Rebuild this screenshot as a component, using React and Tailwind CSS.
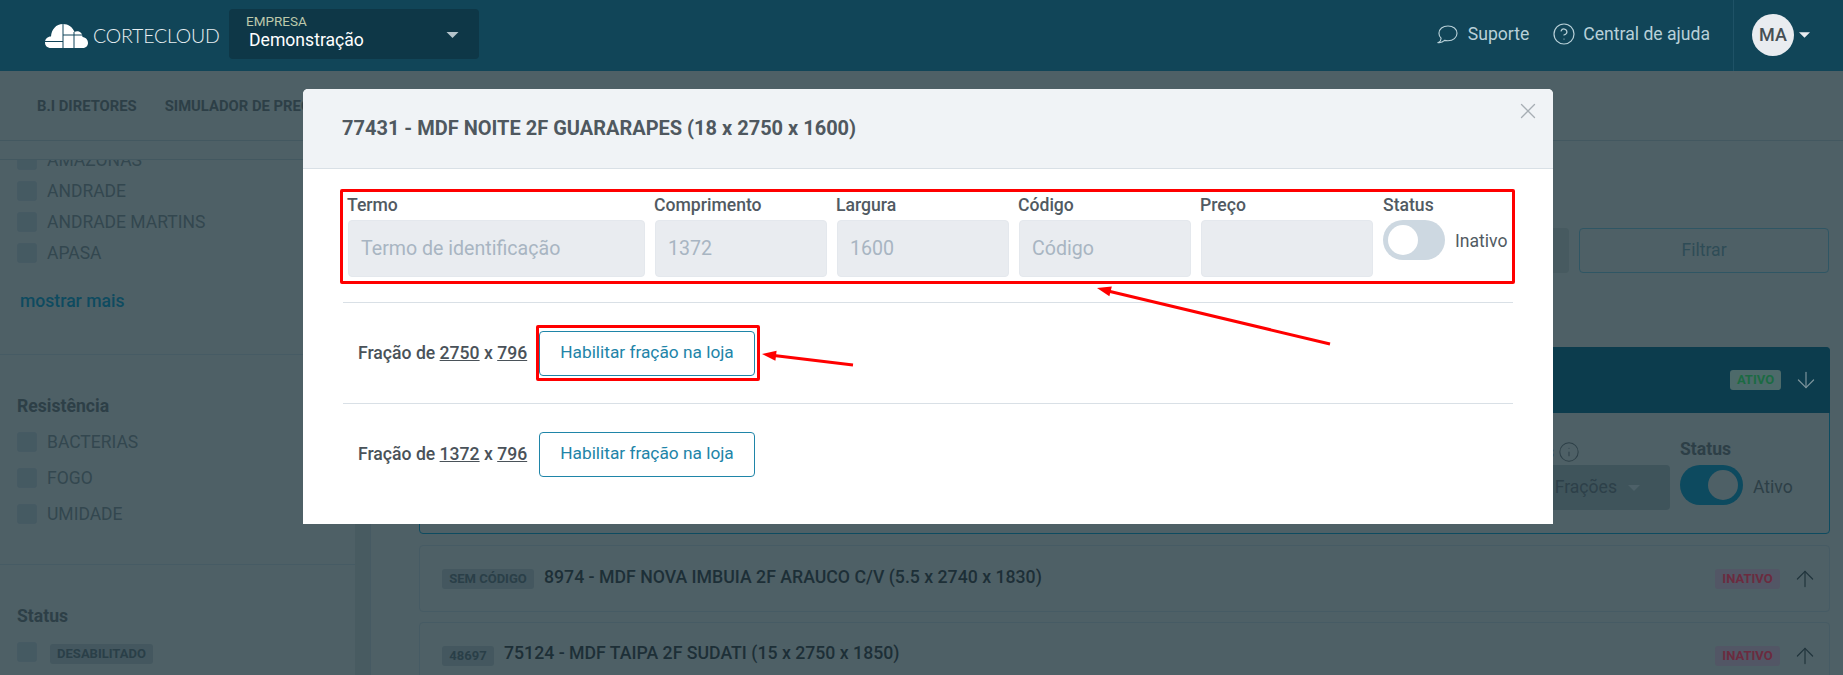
import React from "react";
import { ArrowDown, ArrowUp, CircleHelp, Info, X } from "lucide-react";

const Caret = ({ className }) => (
  <svg viewBox="0 0 12 6" className={className}><path d="M0 0h12L6 6z" fill="currentColor" /></svg>
);

const Logo = () => (
  <svg viewBox="0 0 43 24" className="w-[43px] h-[24px] shrink-0">
    <path d="M6 24C2 24 0 21.500 0 18.500C0 15 2.500 12.500 6 12.500C6.500 5.500 11 0 18 0C23.500 0 27.500 3 29.500 8C31 7 32.500 7 34 7.500C36.500 8.500 37.500 10.500 37.500 13C41 13.500 43 16 43 19C43 22 40.500 24 37.500 24Z" fill="#fff" />
    <path d="M18 0V24M29 8V24M18 11H38M0 17.500H18" stroke="#11455a" strokeWidth="1" fill="none" />
  </svg>
);

const Check = ({ children }) => (
  <div className="flex items-center h-[20px]">
    <span className="w-[20px] h-[20px] rounded-[3px] bg-[#455a62] border border-[#465a63] shrink-0" />
    <span className="ml-[10px] text-[17.500px] text-[#33474f]">{children}</span>
  </div>
);

const Field = ({ label, placeholder, w }) => (
  <div className={`${w} shrink-0`}>
    <div className="h-[24px] text-[17.600px] font-medium leading-[18px] text-[#515a62] -ml-px">{label}</div>
    <div className="h-[57px] flex items-center pl-[12px] rounded-[4px] bg-[#e9ecf0] border border-[#e4e8ed] text-[19.600px] text-[#a8b5c2]">{placeholder}</div>
  </div>
);

const HabButton = () => (
  <button className="w-[216px] h-[45px] rounded-[4px] border border-[#1f85a8] bg-white text-[17.300px] text-[#2284a8]">Habilitar fração na loja</button>
);

const Badge = ({ children, className }) => (
  <span className={`inline-flex items-center justify-center h-[20px] rounded-[3px] text-[13px] font-bold ${className}`}>{children}</span>
);

const ProductCard = ({ code, codeW, title, last }) => (
  <div className={`border border-[#465b64] rounded-[4px] flex items-center pl-[22px] pr-[11px] ${last ? "h-[80px] items-start pt-[23px] mt-[10px]" : "h-[67px] mt-[11px]"}`}>
    <Badge className={`${codeW} bg-[#44575f] text-[#2a3f48]`}>{code}</Badge>
    <span className="ml-[10px] -mt-[3px] text-[17.700px] font-medium text-[#1d2f37] leading-[20px]">{title}</span>
    <Badge className="ml-auto w-[65px] bg-[#525665] text-[#6b2b3f]">INATIVO</Badge>
    <ArrowUp className="ml-[12px] w-[26px] h-[26px] -my-[3px] text-[#20343c]" strokeWidth={1.100} />
  </div>
);

export default function App() {
  return (
    <div className="relative w-[1843px] h-[675px] overflow-hidden bg-[#4e6066] font-['Roboto',sans-serif]">
      <header className="h-[71px] bg-[#114558] flex items-center">
        <div className="ml-[45px] flex items-center">
          <Logo />
          <span className="ml-[5px] w-[136px] font-['Lato',sans-serif] font-light text-[19.500px] tracking-[-0.2px] text-[#e8eff2]">CORTECLOUD</span>
        </div>
        <div className="w-[250px] h-[50px] -mt-[3px] rounded-[4px] bg-[#0e3747] pl-[17px] pr-[20px] flex items-center justify-between">
          <div className="-mt-[4px]">
            <div className="text-[13.500px] leading-[12px] text-[#bcc8ab]">EMPRESA</div>
            <div className="ml-[3px] mt-[3px] text-[17.600px] leading-[20px] text-white">Demonstração</div>
          </div>
          <Caret className="w-[13px] h-[6px] mt-[1px] text-[#b4c4cb]" />
        </div>
        <div className="ml-auto -mt-[2px] flex items-center text-[#b8d0d8] text-[17.600px]">
          <svg viewBox="0 0 22 20" className="w-[21px] h-[19px]" fill="none" stroke="currentColor" strokeWidth="1.200">
            <path d="M11.500 1C6 1 2 4.300 2 8.800C2 10.800 2.800 12.500 4.200 13.800C4.300 15.500 3.300 17.400 1.500 18.500C4 18.700 6.200 17.900 7.900 16.200C9 16.500 10.200 16.600 11.500 16.600C17 16.600 21 13.300 21 8.800C21 4.300 17 1 11.500 1Z" />
          </svg>
          <span className="ml-[10px]">Suporte</span>
          <CircleHelp className="ml-[23px] w-[24px] h-[24px]" strokeWidth={1.200} />
          <span className="ml-[7px]">Central de ajuda</span>
        </div>
        <div className="ml-[23px] h-[71px] border-l border-[#1f5266] w-[110px] flex items-center pl-[18px]">
          <span className="w-[42px] h-[42px] -mt-[2px] rounded-full bg-[#e9ecf0] text-[#464f55] font-medium text-[18px] flex items-center justify-center">MA</span>
          <Caret className="ml-[5px] -mt-[2px] w-[11px] h-[6px] text-[#e9ecf0]" />
        </div>
      </header>

      <nav className="h-[70px] border-b border-[#435860] flex items-center pl-[37px] pt-[2px] gap-[28px] text-[14.800px] font-bold text-[#2d3f47]">
        <span>B.I DIRETORES</span>
        <span>SIMULADOR DE PREÇOS</span>
      </nav>

      <div className="flex">
        <aside className="w-[355px] shrink-0 pt-[18px]">
          <div className="border-t border-[#435860] h-[516px] overflow-hidden pl-[17px]">
            <div className="-mt-[10px] flex flex-col gap-[11px]">
              <Check>AMAZONAS</Check>
              <Check>ANDRADE</Check>
              <Check>ANDRADE MARTINS</Check>
              <Check>APASA</Check>
            </div>
            <div className="mt-[26px] ml-[3px] h-[24px] leading-[24px] text-[17.600px] font-medium text-[#0e4b60]">mostrar mais</div>
            <div className="mt-[41px] -ml-[17px] border-t border-[#465b64]" />
            <div className="mt-[39px] h-[24px] leading-[24px] text-[17.600px] font-bold text-[#2d3f47]">Resistência</div>
            <div className="mt-[14px] flex flex-col gap-[16px]">
              <Check>BACTERIAS</Check>
              <Check>FOGO</Check>
              <Check>UMIDADE</Check>
            </div>
            <div className="mt-[40px] -ml-[17px] border-t border-[#465b64]" />
            <div className="mt-[39px] h-[24px] leading-[24px] text-[17.600px] font-bold text-[#2d3f47]">Status</div>
            <div className="mt-[12px] flex items-center">
              <span className="w-[20px] h-[20px] rounded-[3px] bg-[#455a62] border border-[#465a63]" />
              <Badge className="ml-[13px] w-[103px] mt-[4px] bg-[#44575f] text-[#2a3f48]">DESABILITADO</Badge>
            </div>
          </div>
        </aside>
        <div className="w-[16px] h-[540px] shrink-0 bg-[#485b61] border-r border-[#465a63]" />
        <main className="flex-1 pl-[48px] pr-[13px] pt-[87px]">
          <div className="flex justify-end gap-[10px] pr-[1px]">
            <div className="w-[300px] h-[45px] rounded-[4px] bg-[#475a60]" />
            <button className="w-[250px] h-[45px] rounded-[4px] border border-[#2f5664] text-[17.600px] text-[#2e4c56]">Filtrar</button>
          </div>
          <div className="mt-[74px] h-[187px] border border-[#0d4b60] rounded-[4px]">
            <div className="h-[66px] -m-px bg-[#0c3c4d] rounded-t-[4px] flex items-center justify-end pr-[11px]">
              <Badge className="w-[51px] bg-[#4d6a6a] text-[#1b6a43]">ATIVO</Badge>
              <ArrowDown className="ml-[12px] w-[26px] h-[26px] text-[#7d949c]" strokeWidth={1.100} />
            </div>
            <div className="flex justify-end gap-[10px] pr-[10px] pt-[27px]">
              <div className="w-[300px]">
                <div className="h-[26px] flex items-center justify-end pr-[90px] text-[17.600px] font-bold text-[#2d3f47]">
                  Frações <Info className="ml-[4px] w-[22px] h-[22px] text-[#2d3f47]" strokeWidth={1.100} />
                </div>
                <div className="h-[45px] rounded-[4px] bg-[#3f545b] flex items-center justify-end pr-[30px] text-[17.600px] text-[#2d4049]">
                  Frações <Caret className="ml-[11px] w-[12px] h-[6px] text-[#4d6068]" />
                </div>
              </div>
              <div className="w-[139px]">
                <div className="h-[26px] text-[17.600px] font-bold text-[#2d3f47] leading-[20px]">Status</div>
                <div className="flex items-center">
                  <span className="w-[63px] h-[40px] rounded-full bg-[#0d4a5f] flex items-center justify-end pr-[5px]">
                    <span className="w-[30px] h-[30px] rounded-full bg-[#4e6066]" />
                  </span>
                  <span className="ml-[10px] mt-[4px] text-[17.600px] text-[#2d3f47]">Ativo</span>
                </div>
              </div>
            </div>
          </div>
          <ProductCard code="SEM CÓDIGO" codeW="w-[92px]" title="8974 - MDF NOVA IMBUIA 2F ARAUCO C/V (5.5 x 2740 x 1830)" />
          <ProductCard last code="48697" codeW="w-[52px]" title="75124 - MDF TAIPA 2F SUDATI (15 x 2750 x 1850)" />
        </main>
      </div>

      <div className="absolute left-[303px] top-[89px] w-[1250px] h-[435px] bg-white rounded-t-[5px]">
        <div className="relative h-[80px] bg-[#f0f3f6] border-b border-[#d9e0e6] rounded-t-[5px] flex items-center pl-[39px]">
          <span className="text-[20px] font-bold text-[#4f585f] -mt-[1px]">77431 - MDF NOITE 2F GUARARAPES (18 x 2750 x 1600)</span>
          <X className="absolute left-[1212px] top-[9px] w-[26px] h-[26px] text-[#a7aeb4]" strokeWidth={1.200} />
        </div>
        <div className="px-[40px] pt-[20px]">
          <div className="-mx-[3px] -mr-[2px] h-[95px] border-[3px] border-[#ff0000] rounded-[2px] pl-[5px] pt-[4px] flex gap-[10px]">
            <Field label="Termo" placeholder="Termo de identificação" w="w-[297px]" />
            <Field label="Comprimento" placeholder="1372" w="w-[172px]" />
            <Field label="Largura" placeholder="1600" w="w-[172px]" />
            <Field label="Código" placeholder="Código" w="w-[172px]" />
            <Field label="Preço" placeholder="" w="w-[172px]" />
            <div>
              <div className="h-[24px] text-[17.600px] font-medium leading-[18px] text-[#515a62]">Status</div>
              <div className="flex items-center">
                <span className="w-[62px] h-[40px] rounded-full bg-[#cdd8e1] flex items-center pl-[5px]">
                  <span className="w-[30px] h-[30px] rounded-full bg-white" />
                </span>
                <span className="ml-[10px] mt-[3px] text-[17.600px] text-[#515a62]">Inativo</span>
              </div>
            </div>
          </div>
          <div className="mt-[18px] border-t border-[#d9e0e6] h-[101px] flex items-center pl-[15px]">
            <span className="w-[181px] shrink-0 text-[17.600px] font-medium text-[#4a5259]">Fração de <u>2750</u> x <u>796</u></span>
            <div className="relative">
              <HabButton />
              <span className="absolute left-[-3px] top-[-6px] w-[224px] h-[56px] border-[3px] border-[#ff0000] rounded-[2px]" />
            </div>
          </div>
          <div className="border-t border-[#d9e0e6] h-[101px] flex items-center pl-[15px]">
            <span className="w-[181px] shrink-0 text-[17.600px] font-medium text-[#4a5259]">Fração de <u>1372</u> x <u>796</u></span>
            <HabButton />
          </div>
        </div>
      </div>

      <svg className="absolute left-0 top-0 w-[1843px] h-[675px] pointer-events-none" viewBox="0 0 1843 675">
        <line x1="1330" y1="344" x2="1108" y2="291" stroke="#f00" strokeWidth="3" />
        <polygon points="1097,288 1109.400,296.200 1111.800,286.400" fill="#f00" />
        <line x1="853" y1="365" x2="774" y2="355.500" stroke="#f00" strokeWidth="3" />
        <polygon points="762,354 775.400,360.700 776.600,350.700" fill="#f00" />
      </svg>
    </div>
  );
}
